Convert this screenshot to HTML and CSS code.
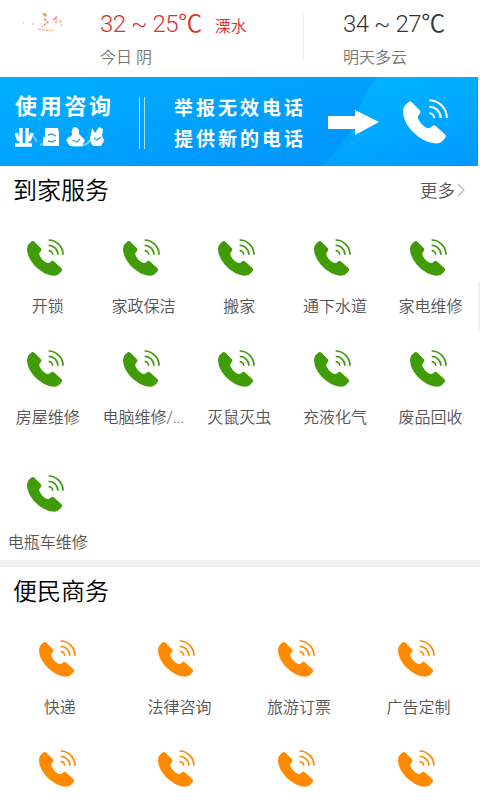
FILE: index.html
```
<!DOCTYPE html>
<html lang="zh-CN">
<head>
<meta charset="utf-8">
<title>便民服务</title>
<link rel="stylesheet" href="styles.css">
</head>
<body>
<svg class="defs" width="0" height="0" aria-hidden="true">
  <symbol id="phone" viewBox="0 0 111 111">
    <path fill="currentColor" d="M11 10Q17 3 23 9L41 27Q46 33 40 38Q34 43 39 52C44 62 52 69 61 72Q67 73 71 68Q76 63 82 68L102 86Q109 92 102 98Q94 110 80 110Q49 108 21 78Q0 53 0 30Q1 17 11 10Z"/>
    <path fill="none" stroke="currentColor" stroke-width="5" d="M65 3A44 44 0 0 1 108 47M65 19A28 28 0 0 1 93 47M65 35A12 12 0 0 1 77 47"/>
  </symbol>
</svg>
<header class="weather">
  <svg class="logo" width="86" height="68" viewBox="0 0 86 68" aria-hidden="true">
    <path d="M42 13l5 1-2 3z" fill="#c79a3c"/>
    <path d="M44 19l4 3-4 3m9-5l3-3v6" fill="none" stroke="#f27a62" stroke-width="1.2" stroke-dasharray="3 1"/>
    <path d="M38 29q7 2 16 1M60 20l2 6M23 23h1m8 1h2m8 3l4-3" fill="none" stroke="#f7b78d" stroke-width="1.3" stroke-dasharray="3 1"/>
  </svg>
  <div class="today">
    <div class="temp red">32 ~ 25℃<span class="city">溧水</span></div>
    <div class="sky">今日 阴</div>
  </div>
  <div class="tomorrow">
    <div class="temp">34 ~ 27℃</div>
    <div class="sky">明天多云</div>
  </div>
</header>
<section class="banner">
  <div class="consult">
    <div class="consult-title">使用咨询</div>
    <svg class="stamps" width="94" height="24" viewBox="0 0 94 24" aria-hidden="true">
      <g fill="none" stroke="#5ed4ff" stroke-width="2"><path d="M17 8l5 8M29 17l-4 2M54 11q-4 9 9 9 12 0 14-11M75 15q5 8 14 0"/></g>
      <g fill="none" stroke="#fff" stroke-width="3.4"><path d="M6 2v17M12 2v17M1 7l3 8M17 7l-3 8M0 19h17"/></g>
      <path fill="#fff" d="M30 2h13l1 5v13H28v-9h2zM60 1q5 1 4 7l6 6-3 6H55l-4-6 6-5q-1-8 3-8zM77 2l3 5 4-6 4 2-1 7 2 4-3 6H78l-3-7z"/>
      <path fill="none" stroke="#3b9cc8" stroke-width="1.3" d="M33 9l4-1 4 2m-8 5l4 1 4-2M57 14l5 2 3-3M79 12l3 2 4-3M17 17l4-1"/>
    </svg>
  </div>
  <div class="bars"></div>
  <div class="report">举报无效电话<br>提供新的电话</div>
  <svg class="arrow" width="51" height="26" viewBox="0 0 51 26" aria-hidden="true"><path fill="#fff" d="M0 6h27V0l24 12-24 13v-6H0z"/></svg>
  <svg class="call"><use href="#phone"/></svg>
</section>
<main>
  <section class="home">
    <div class="head"><h2>到家服务</h2><a class="more">更多<svg width="8" height="14" viewBox="0 0 8 14"><path d="M1 1l6 6-6 6" fill="none" stroke="#b5b5b5" stroke-width="1.1"/></svg></a></div>
    <div class="grid five">
      <div class="item"><svg><use href="#phone"/></svg><span>开锁</span></div>
      <div class="item"><svg><use href="#phone"/></svg><span>家政保洁</span></div>
      <div class="item"><svg><use href="#phone"/></svg><span>搬家</span></div>
      <div class="item"><svg><use href="#phone"/></svg><span>通下水道</span></div>
      <div class="item"><svg><use href="#phone"/></svg><span>家电维修</span></div>
      <div class="item"><svg><use href="#phone"/></svg><span>房屋维修</span></div>
      <div class="item"><svg><use href="#phone"/></svg><span>电脑维修/...</span></div>
      <div class="item"><svg><use href="#phone"/></svg><span>灭鼠灭虫</span></div>
      <div class="item"><svg><use href="#phone"/></svg><span>充液化气</span></div>
      <div class="item"><svg><use href="#phone"/></svg><span>废品回收</span></div>
      <div class="item"><svg><use href="#phone"/></svg><span>电瓶车维修</span></div>
    </div>
  </section>
  <section class="business">
    <div class="head"><h2>便民商务</h2></div>
    <div class="grid four">
      <div class="item"><svg><use href="#phone"/></svg><span>快递</span></div>
      <div class="item"><svg><use href="#phone"/></svg><span>法律咨询</span></div>
      <div class="item"><svg><use href="#phone"/></svg><span>旅游订票</span></div>
      <div class="item"><svg><use href="#phone"/></svg><span>广告定制</span></div>
      <div class="item"><svg><use href="#phone"/></svg></div>
      <div class="item"><svg><use href="#phone"/></svg></div>
      <div class="item"><svg><use href="#phone"/></svg></div>
      <div class="item"><svg><use href="#phone"/></svg></div>
    </div>
  </section>
</main>
<div class="scrollbar"></div>
</body>
</html>
```
FILE: styles.css
```
* { box-sizing: border-box; }
body {
  margin: 0;
  width: 480px;
  height: 800px;
  overflow: hidden;
  position: relative;
  background: #fff;
  color: #555;
  font-family: Roboto, "Noto Sans CJK SC", sans-serif;
  font-weight: 350;
}
svg { display: block; }
.defs { position: absolute; }
.weather { display: flex; height: 77px; }
.logo { flex: none; width: 86px; }
.today {
  width: 218px;
  padding: 9px 0 0 14px;
  background: linear-gradient(#eee, #eee) right 13px / 1px 47px no-repeat;
}
.tomorrow { padding: 9px 0 0 39px; }
.temp {
  height: 30px;
  line-height: 30px;
  font-size: 24px;
  font-weight: 350;
  letter-spacing: -0.45px;
  color: #333;
  white-space: nowrap;
}
.red { color: #d93030; }
.city { font-size: 16px; margin-left: 13px; letter-spacing: 0; }
.sky { margin-top: 7px; line-height: 24px; font-size: 16px; color: #777; }
.banner {
  display: flex;
  width: 478px;
  height: 89px;
  color: #fff;
  background: linear-gradient(165deg, #00b0ff, #008efc);
  position: relative;
}
.banner::before {
  content: "";
  position: absolute;
  inset: 0;
  background: linear-gradient(165deg, #00c0ff 20%, #009aff);
  clip-path: path("M378 0H478V89H320Q347 68 357 37Q365 13 378 0Z");
}
.consult { width: 125px; padding: 16px 0 0 15px; }
.consult-title {
  height: 28px;
  line-height: 28px;
  font-size: 22px;
  font-weight: 700;
  letter-spacing: 2.7px;
  white-space: nowrap;
}
.stamps { margin-top: 5px; }
.bars {
  width: 6px;
  height: 52px;
  margin: 20px 0 0 14px;
  border: solid #a5e0ff;
  border-width: 0 1px;
}
.report {
  margin: 16px 0 0 29px;
  width: 154px;
  font-size: 19px;
  line-height: 31px;
  font-weight: 700;
  letter-spacing: 3px;
  white-space: nowrap;
}
.arrow { position: relative; flex: none; margin-top: 33px; }
.call { position: relative; flex: none; width: 45px; height: 45px; margin: 22px 0 0 24px; }
.head { display: flex; justify-content: space-between; height: 50px; padding: 7px 15px 0 13px; }
h2 { margin: 0; font-size: 24px; line-height: 36px; font-weight: 350; color: #000; }
.more { display: flex; align-items: center; gap: 2px; height: 33px; font-size: 17.5px; }
.grid { display: grid; }
.item { display: flex; flex-direction: column; align-items: center; }
.item svg { width: 37px; height: 37px; margin-right: 5px; }
.item span { margin-top: 18px; line-height: 26px; font-size: 16px; white-space: nowrap; }
.home { height: 394px; }
.five { grid-template-columns: repeat(5, 95.7px); grid-template-rows: 111px 125px 87px; padding-top: 23px; }
.five svg { color: #419b07; }
.business { border-top: 7px solid #f1f1f1; }
.four { grid-template-columns: repeat(4, 119.6px); grid-template-rows: 110px 50px; padding-top: 23px; }
.four svg { color: #ff8a00; }
.scrollbar { position: absolute; right: 0; top: 282px; width: 2px; height: 49px; background: #f0f0f0; }
```
